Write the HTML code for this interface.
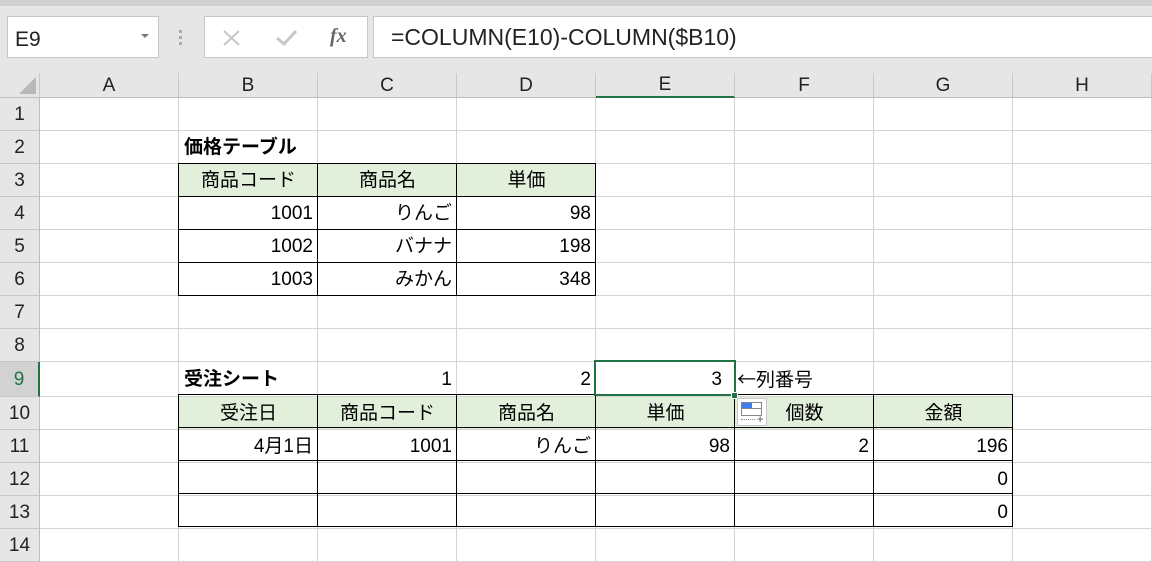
<!DOCTYPE html>
<html><head><meta charset="utf-8"><style>
*{box-sizing:border-box;margin:0;padding:0}
body{width:1152px;height:560px;overflow:hidden;background:#e6e6e6;font-family:"Liberation Sans","Noto Sans CJK JP",sans-serif;position:relative}
.abs{position:absolute}
table{position:absolute;left:0;top:73px;border-collapse:separate;border-spacing:0;table-layout:fixed;width:1152px}
td{height:33px;border-right:1px solid #d4d4d4;border-bottom:1px solid #d4d4d4;background:#fff;font-size:19px;padding:2px 4px 0 5px;white-space:nowrap;color:#000;line-height:30px}
tr.h td{height:24px;background:#e6e6e6;text-align:center;font-size:19px;border-right:1px solid #c8c8c8;border-bottom:1px solid #bdbdbd;line-height:22px;color:#222;padding:1px 0 0}
td.rh{background:#e6e6e6;text-align:center;border-right:1px solid #bdbdbd;border-bottom:1px solid #c8c8c8;padding:2px 0 0;color:#222}
td.sel{background:#d2d2d2;color:#217346}
tr.h td.sel{border-bottom:2px solid #217346}
td.rh.sel{border-right:2px solid #217346}
.r{text-align:right}.c{text-align:center}.b{font-weight:bold}
.g{background:#e2efda}
.bl{position:absolute;background:#000}
</style></head><body>
<div class="abs" style="left:0;top:0;width:1152px;height:6px;background:#d0d0d0"></div>
<div class="abs" style="left:7px;top:16px;width:152px;height:42px;background:#fff;border:1px solid #c6c6c6"></div>
<div class="abs" style="left:15px;top:28px;font-size:21px;color:#222">E9</div>
<div class="abs" style="left:141px;top:34px;width:0;height:0;border-left:4px solid transparent;border-right:4px solid transparent;border-top:4px solid #777"></div>
<div class="abs" style="left:179px;top:30px;width:3px;height:3px;background:#aaa;box-shadow:0 6px 0 #aaa,0 12px 0 #aaa"></div>
<div class="abs" style="left:204px;top:16px;width:164px;height:42px;background:#fff;border:1px solid #c6c6c6"></div>
<svg class="abs" style="left:222px;top:29px" width="20" height="18"><path d="M2 2L17 16M17 2L2 16" stroke="#c8c8c8" stroke-width="2.2"/></svg>
<svg class="abs" style="left:275px;top:29px" width="24" height="18"><path d="M2 9L9 15L21 2" stroke="#c8c8c8" stroke-width="3" fill="none"/></svg>
<div class="abs" style="left:330px;top:25px;font-family:'Liberation Serif',serif;font-style:italic;font-weight:bold;font-size:20px;color:#666">fx</div>
<div class="abs" style="left:373px;top:16px;width:790px;height:42px;background:#fff;border:1px solid #c6c6c6"></div>
<div class="abs" style="left:391px;top:24px;font-size:23px;color:#222">=COLUMN(E10)-COLUMN($B10)</div>

<table>
<colgroup><col style="width:40px"><col span="8" style="width:139px"></colgroup>
<tr class="h"><td class="rh" style="position:relative"><div class="abs" style="right:3px;bottom:3px;width:0;height:0;border-left:17px solid transparent;border-bottom:17px solid #b8b8b8"></div></td><td>A</td><td>B</td><td>C</td><td>D</td><td class="sel">E</td><td>F</td><td>G</td><td>H</td></tr>
<tr><td class="rh">1</td><td></td><td></td><td></td><td></td><td></td><td></td><td></td><td></td></tr>
<tr><td class="rh">2</td><td></td><td class="b">価格テーブル</td><td></td><td></td><td></td><td></td><td></td><td></td></tr>
<tr><td class="rh">3</td><td></td><td class="c g">商品コード</td><td class="c g">商品名</td><td class="c g">単価</td><td></td><td></td><td></td><td></td></tr>
<tr><td class="rh">4</td><td></td><td class="r">1001</td><td class="r">りんご</td><td class="r">98</td><td></td><td></td><td></td><td></td></tr>
<tr><td class="rh">5</td><td></td><td class="r">1002</td><td class="r">バナナ</td><td class="r">198</td><td></td><td></td><td></td><td></td></tr>
<tr><td class="rh">6</td><td></td><td class="r">1003</td><td class="r">みかん</td><td class="r">348</td><td></td><td></td><td></td><td></td></tr>
<tr><td class="rh">7</td><td></td><td></td><td></td><td></td><td></td><td></td><td></td><td></td></tr>
<tr><td class="rh">8</td><td></td><td></td><td></td><td></td><td></td><td></td><td></td><td></td></tr>
<tr><td class="rh sel">9</td><td></td><td class="b">受注シート</td><td class="r">1</td><td class="r">2</td><td class="r" style="padding-right:12px">3</td><td style="padding-left:2px"><span style="font-family:'Noto Sans CJK JP',sans-serif">←</span>列番号</td><td></td><td></td></tr>
<tr><td class="rh">10</td><td></td><td class="c g">受注日</td><td class="c g">商品コード</td><td class="c g">商品名</td><td class="c g">単価</td><td class="c g">個数</td><td class="c g">金額</td><td></td></tr>
<tr><td class="rh">11</td><td></td><td class="r">4月1日</td><td class="r">1001</td><td class="r">りんご</td><td class="r">98</td><td class="r">2</td><td class="r">196</td><td></td></tr>
<tr><td class="rh">12</td><td></td><td></td><td></td><td></td><td></td><td></td><td class="r">0</td><td></td></tr>
<tr><td class="rh">13</td><td></td><td></td><td></td><td></td><td></td><td></td><td class="r">0</td><td></td></tr>
<tr><td class="rh">14</td><td></td><td></td><td></td><td></td><td></td><td></td><td></td><td></td></tr>
</table>

<div class="bl" style="left:178px;top:163px;width:1px;height:133px"></div>
<div class="bl" style="left:317px;top:163px;width:1px;height:133px"></div>
<div class="bl" style="left:456px;top:163px;width:1px;height:133px"></div>
<div class="bl" style="left:595px;top:163px;width:1px;height:133px"></div>
<div class="bl" style="left:178px;top:163px;width:418px;height:1px"></div>
<div class="bl" style="left:178px;top:196px;width:418px;height:1px"></div>
<div class="bl" style="left:178px;top:229px;width:418px;height:1px"></div>
<div class="bl" style="left:178px;top:262px;width:418px;height:1px"></div>
<div class="bl" style="left:178px;top:295px;width:418px;height:1px"></div>
<div class="bl" style="left:178px;top:394px;width:1px;height:133px"></div>
<div class="bl" style="left:317px;top:394px;width:1px;height:133px"></div>
<div class="bl" style="left:456px;top:394px;width:1px;height:133px"></div>
<div class="bl" style="left:595px;top:394px;width:1px;height:133px"></div>
<div class="bl" style="left:734px;top:394px;width:1px;height:133px"></div>
<div class="bl" style="left:873px;top:394px;width:1px;height:133px"></div>
<div class="bl" style="left:1012px;top:394px;width:1px;height:133px"></div>
<div class="bl" style="left:178px;top:394px;width:835px;height:1px"></div>
<div class="bl" style="left:178px;top:427px;width:835px;height:1px"></div>
<div class="bl" style="left:178px;top:460px;width:835px;height:1px"></div>
<div class="bl" style="left:178px;top:493px;width:835px;height:1px"></div>
<div class="bl" style="left:178px;top:526px;width:835px;height:1px"></div>
<div class="abs" style="left:594px;top:360px;width:142px;height:36px;border:2px solid #217346"></div>
<div class="abs" style="left:731px;top:392px;width:7px;height:7px;background:#217346;border:1px solid #fff"></div>
<div class="abs" style="left:737px;top:398px;width:30px;height:28px;background:#fff;border:1px solid #c6c6c6"></div>
<div class="abs" style="left:742px;top:403px;width:10px;height:6px;background:#3d7ff0"></div>
<div class="abs" style="left:741px;top:402px;width:21px;height:14px;border:1px solid #888"></div>
<div class="abs" style="left:741px;top:408px;width:21px;height:1px;background:#888"></div>
<div class="abs" style="left:741px;top:419px;width:14px;height:1px;border-top:1px dotted #888"></div>
<div class="abs" style="left:757px;top:414px;font-size:11px;color:#888;font-weight:bold">+</div>
</body></html>
